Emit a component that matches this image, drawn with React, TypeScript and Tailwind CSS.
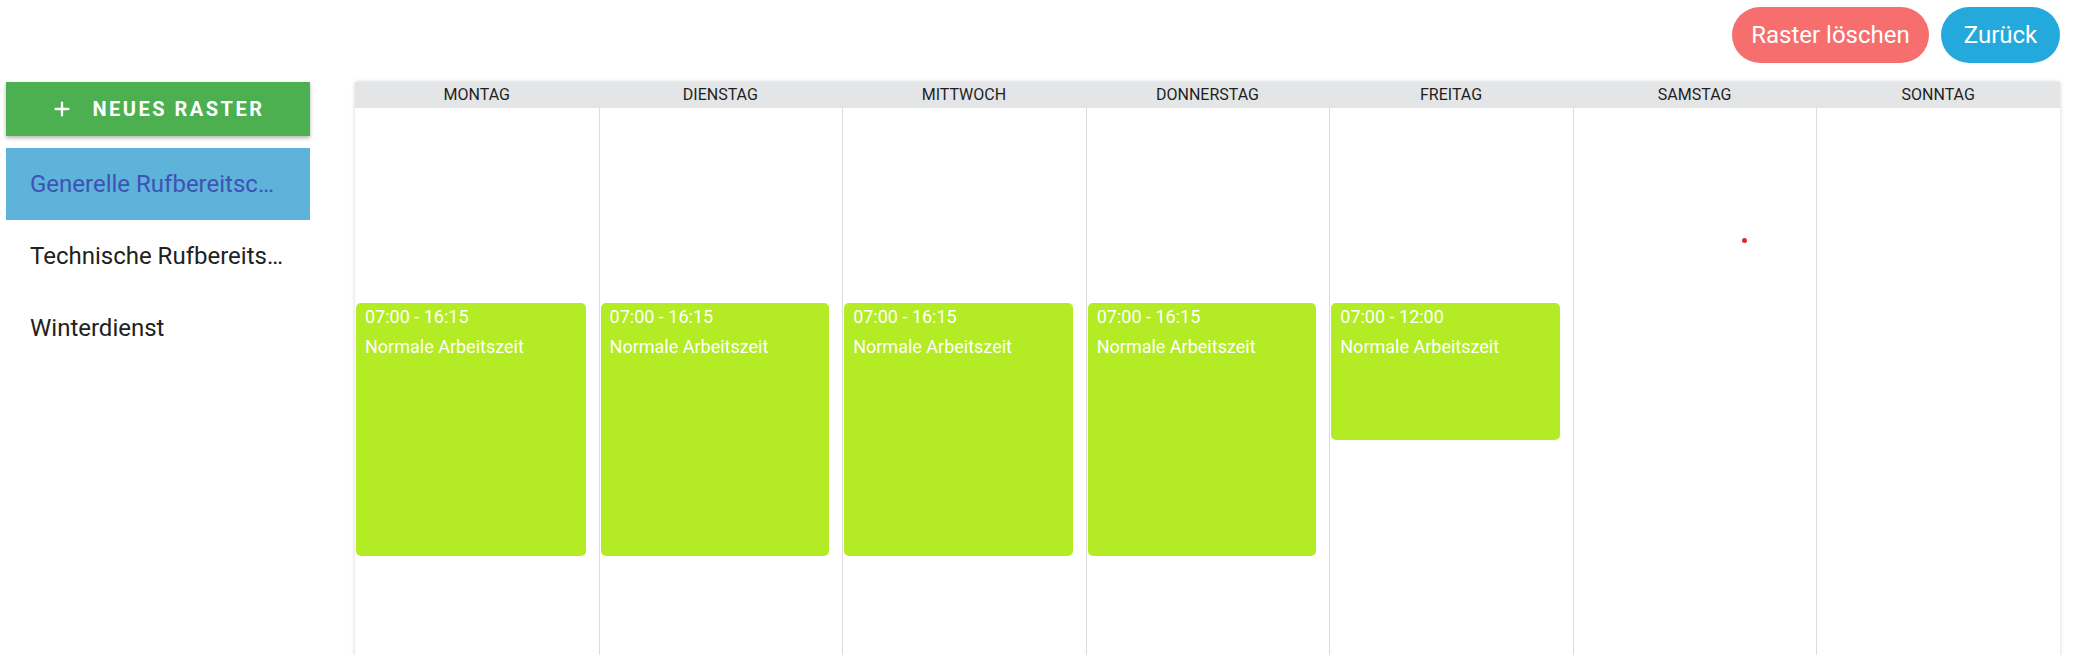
import { Plus } from "lucide-react";

type Shift = {
  day: number;
  start: number;
  end: number;
  label: string;
};

const days = ["Montag", "Dienstag", "Mittwoch", "Donnerstag", "Freitag", "Samstag", "Sonntag"];

const rasters = ["Generelle Rufbereitschaft", "Technische Rufbereitschaft", "Winterdienst"];

const shifts: Shift[] = [
  { day: 0, start: 7, end: 16.25, label: "Normale Arbeitszeit" },
  { day: 1, start: 7, end: 16.25, label: "Normale Arbeitszeit" },
  { day: 2, start: 7, end: 16.25, label: "Normale Arbeitszeit" },
  { day: 3, start: 7, end: 16.25, label: "Normale Arbeitszeit" },
  { day: 4, start: 7, end: 12, label: "Normale Arbeitszeit" },
];

// pixels per hour in the week grid
const HOUR = 27.35;
const OFFSET = 3.5;

const fmt = (h: number) => {
  const hh = Math.floor(h);
  const mm = Math.round((h - hh) * 60);
  return `${String(hh).padStart(2, "0")}:${String(mm).padStart(2, "0")}`;
};

const App = () => {
  const selected = 0;

  return (
    <div className="w-full h-[655px] overflow-hidden bg-white font-['Roboto',sans-serif]">
      {/* top actions */}
      <div className="flex justify-end gap-[12px] pt-[7px] pr-[17px] h-[82px]">
        <button className="h-[56px] w-[197px] rounded-full bg-[#f76e6e] text-white text-[24px]">
          Raster löschen
        </button>
        <button className="h-[56px] w-[119px] rounded-full bg-[#23a9db] text-white text-[24px]">
          Zurück
        </button>
      </div>

      <div className="flex">
        {/* raster list */}
        <aside className="w-[304px] ml-[6px] shrink-0">
          <button className="w-full h-[54px] bg-[#4caf50] text-white flex items-center justify-center gap-[19px] shadow-[0_2px_4px_rgba(0,0,0,0.3)]">
            <Plus size={22} strokeWidth={2.5} />
            <span className="text-[20px] font-bold tracking-[2.5px] leading-none">NEUES RASTER</span>
          </button>
          <ul className="mt-[12px]">
            {rasters.map((r, i) => (
              <li
                key={r}
                className={
                  i === selected
                    ? "h-[72px] flex items-center px-[24px] bg-[#5db3da] text-[#3f51b5] text-[24px]"
                    : "h-[72px] flex items-center px-[24px] text-[#212121] text-[24px]"
                }
              >
                <span className="truncate">{r}</span>
              </li>
            ))}
          </ul>
        </aside>

        {/* week grid */}
        <div className="ml-[45px] w-[1705px] shrink-0 shadow-[0_0_4px_rgba(0,0,0,0.18)]">
          <div className="grid grid-cols-7 h-[26px] bg-[#e4e5e7]">
            {days.map((d) => (
              <div key={d} className="flex items-center justify-center text-[16px] text-[#1f1f1f] uppercase">
                {d}
              </div>
            ))}
          </div>
          <div className="grid grid-cols-7 h-[560px]">
            {days.map((d, i) => (
              <div key={d} className={i === 0 ? "relative" : "relative border-l border-[#dcdcdc]"}>
                {shifts
                  .filter((s) => s.day === i)
                  .map((s) => (
                    <div
                      key={s.label + s.start}
                      className="absolute left-[1px] right-[13px] rounded-[5px] bg-[#b3eb25] text-white text-[18px] px-[9px]"
                      style={{ top: s.start * HOUR + OFFSET, height: (s.end - s.start) * HOUR }}
                    >
                      <div className="leading-[26px] pt-[1px]">
                        {fmt(s.start)} - {fmt(s.end)}
                      </div>
                      <div className="leading-[24px] mt-[5px]">{s.label}</div>
                    </div>
                  ))}
                {i === 5 && (
                  <div className="absolute left-[168px] top-[130px] w-[5px] h-[5px] rounded-full bg-[#e12828]" />
                )}
              </div>
            ))}
          </div>
        </div>
      </div>
    </div>
  );
};

export default App;
